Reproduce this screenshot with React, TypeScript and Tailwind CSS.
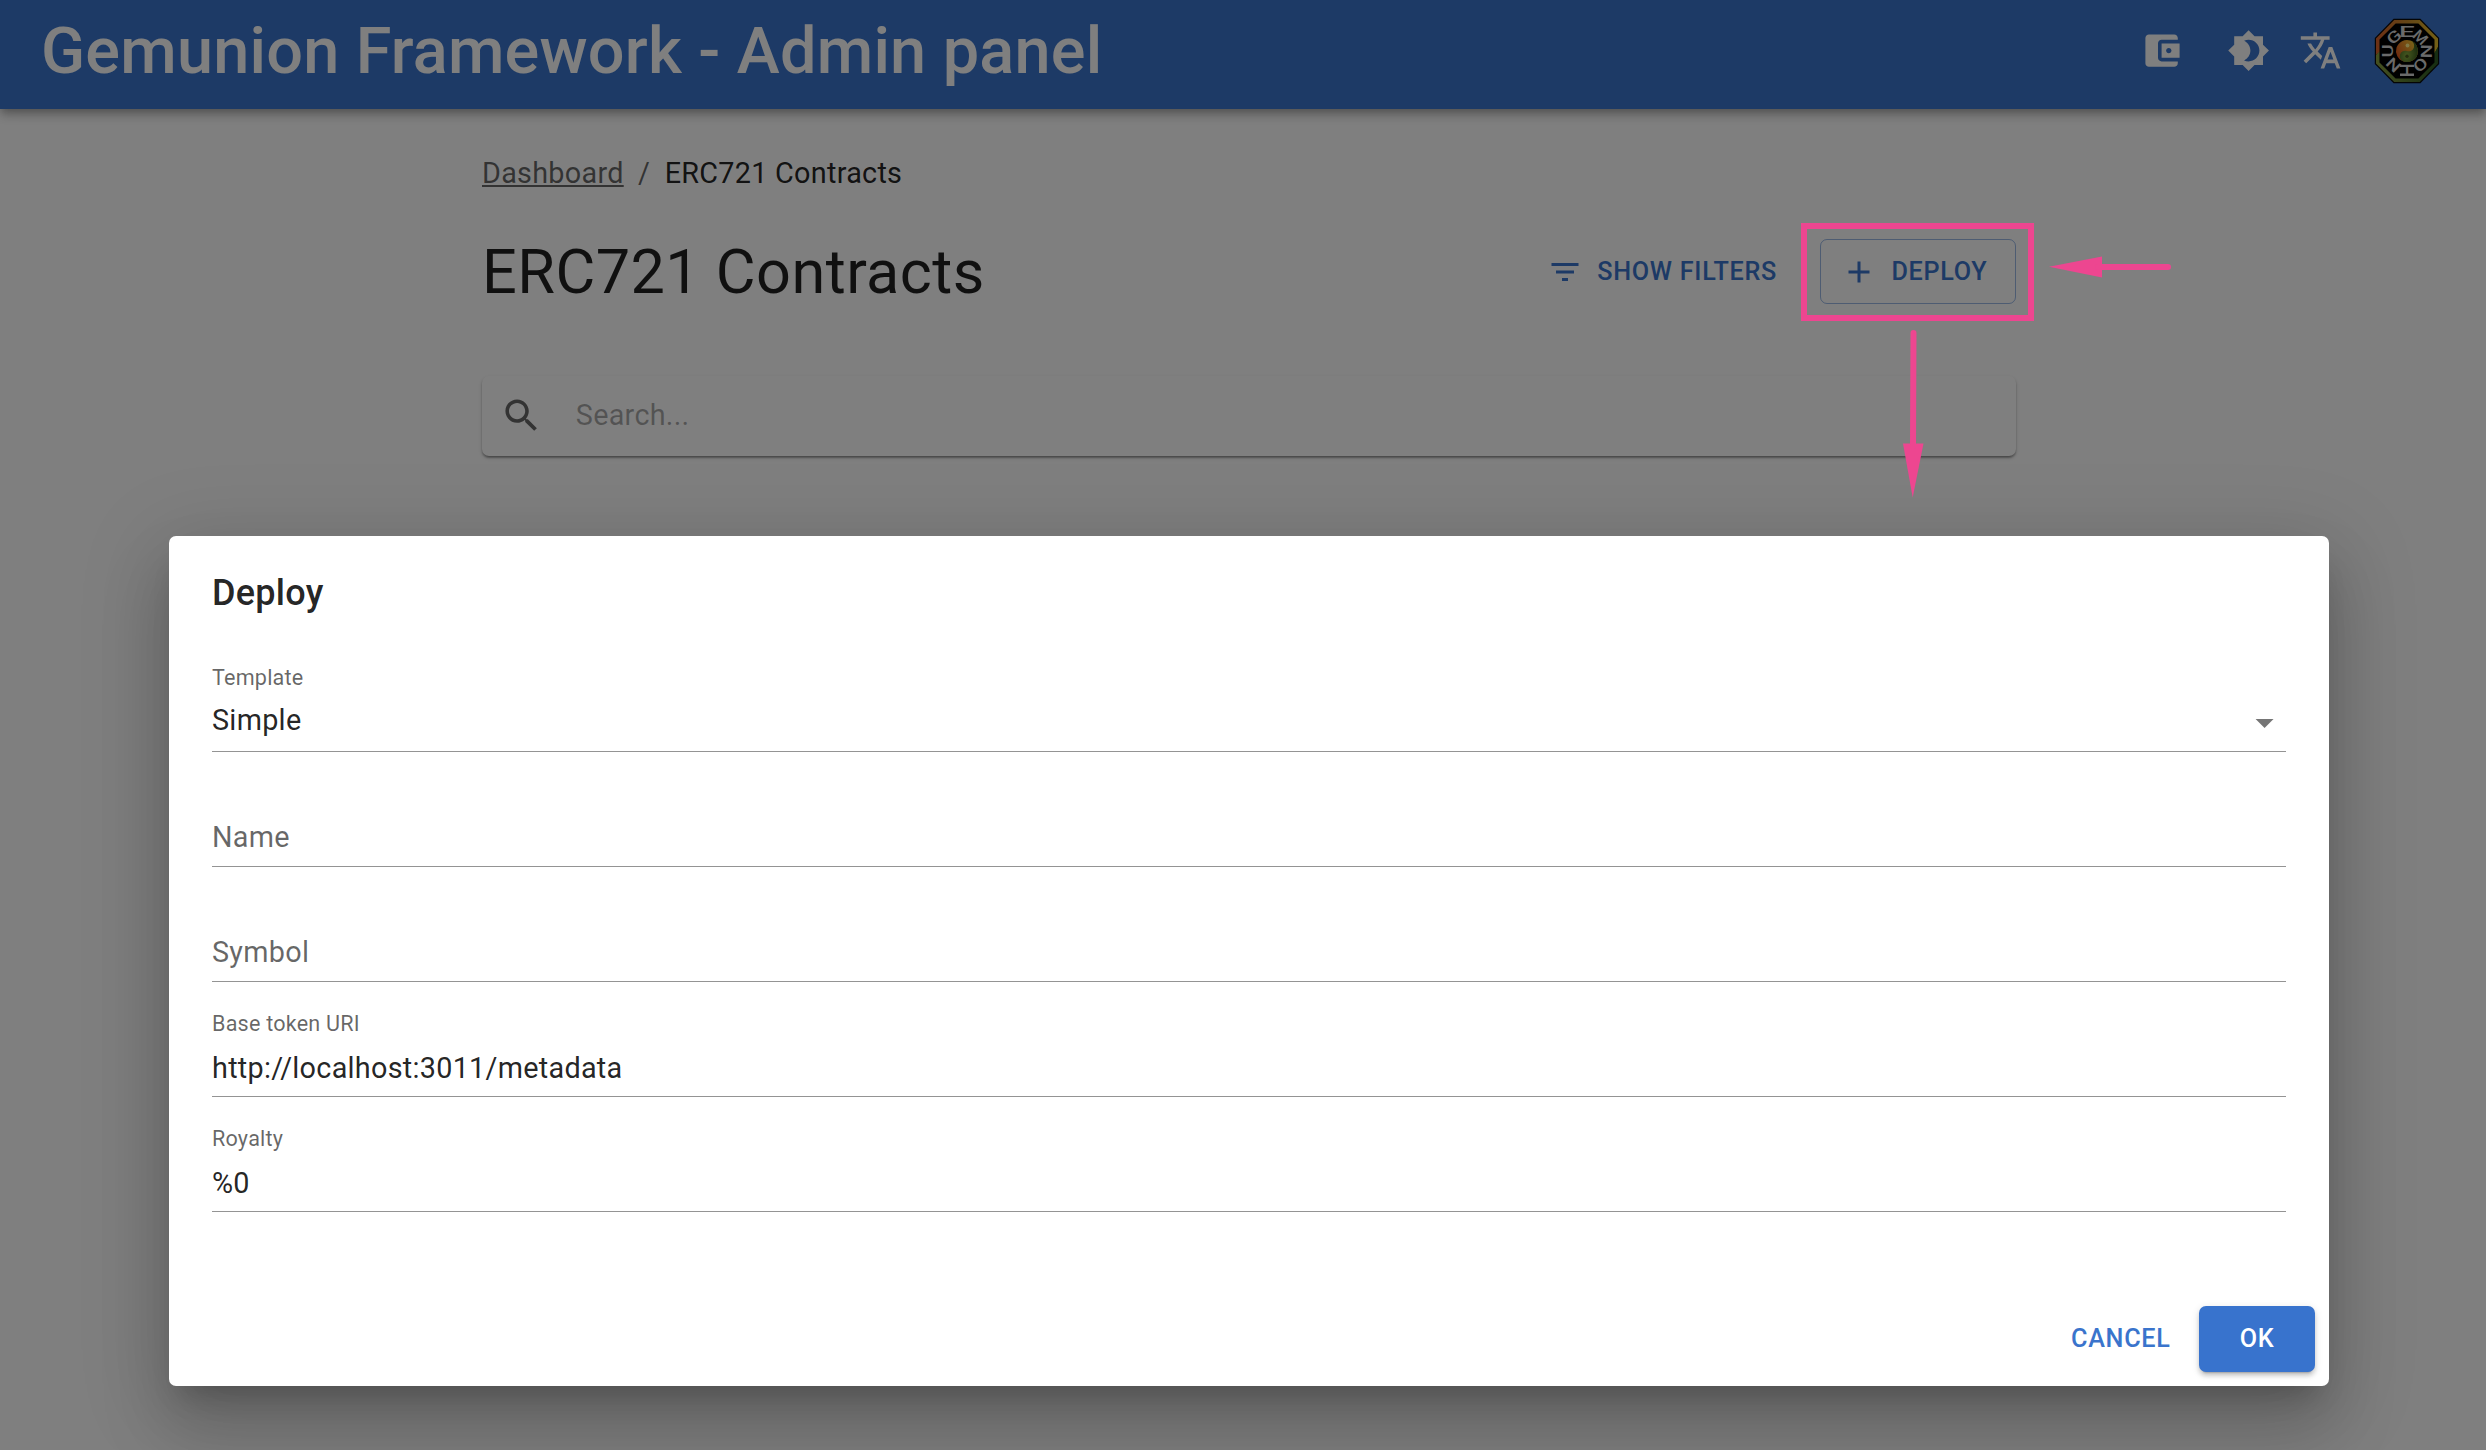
import React from "react";

function Icon({ d, className }: { d: string; className: string }) {
  return (
    <svg viewBox="0 0 24 24" fill="currentColor" className={className}>
      <path d={d} />
    </svg>
  );
}

const WALLET =
  "M21 18v1c0 1.1-.9 2-2 2H5c-1.11 0-2-.9-2-2V5c0-1.1.89-2 2-2h14c1.1 0 2 .9 2 2v1h-9c-1.11 0-2 .9-2 2v8c0 1.1.89 2 2 2h9zm-9-2h10V8H12v8zm4-2.5c-.83 0-1.5-.67-1.5-1.5s.67-1.5 1.5-1.5 1.5.67 1.5 1.5-.67 1.5-1.5 1.5z";
const BRIGHTNESS =
  "M20 8.69V4h-4.69L12 .69 8.69 4H4v4.69L.69 12 4 15.31V20h4.69L12 23.31 15.31 20H20v-4.69L23.31 12 20 8.69zM12 18c-.89 0-1.74-.2-2.5-.55C11.56 16.5 13 14.42 13 12s-1.44-4.5-3.5-5.45C10.26 6.2 11.11 6 12 6c3.31 0 6 2.69 6 6s-2.69 6-6 6z";
const TRANSLATE =
  "M12.87 15.07l-2.54-2.51.03-.03c1.74-1.94 2.98-4.17 3.71-6.53H17V4h-7V2H8v2H1v1.99h11.17C11.5 7.92 10.44 9.75 9 11.35 8.07 10.32 7.3 9.19 6.69 8h-2c.73 1.63 1.73 3.17 2.98 4.56l-5.09 5.02L4 19l5-5 3.11 3.11.76-2.04zM18.5 10h-2L12 22h2l1.12-3h4.75L21 22h2l-4.5-12zm-2.62 7l1.62-4.33L19.12 17h-3.24z";
const FILTER = "M10 18h4v-2h-4v2zM3 6v2h18V6H3zm3 7h12v-2H6v2z";
const ADD = "M19 13h-6v6h-2v-6H5v-2h6V5h2v6h6v2z";
const SEARCH =
  "M15.5 14h-.79l-.28-.27C15.41 12.59 16 11.11 16 9.5 16 5.91 13.09 3 9.5 3S3 5.91 3 9.5 5.91 16 9.5 16c1.61 0 3.09-.59 4.23-1.57l.27.28v.79l5 4.99L20.49 19l-4.99-5zm-6 0C7.01 14 5 11.99 5 9.5S7.01 5 9.5 5 14 7.01 14 9.5 11.99 14 9.5 14z";
const DROPDOWN = "M7 10l5 5 5-5z";

/* Letters around the badge, each facing outward; sx widens the glyph. */
const RING = [
  { ch: "G", at: -43, sx: 1.35 },
  { ch: "E", at: 0, sx: 1.8 },
  { ch: "M", at: 44, sx: 1.05 },
  { ch: "N", at: 91, sx: 1.3 },
  { ch: "O", at: 136, sx: 1.3 },
  { ch: "I", at: 180, sx: 1.1 },
  { ch: "N", at: 224, sx: 1.25 },
  { ch: "U", at: 270, sx: 1.3 },
];

function Avatar() {
  return (
    <svg viewBox="-36 -36 72 72" className="size-[72px]">
      <defs>
        <linearGradient id="rimTop" x1="0" x2="1" y1="0" y2="0">
          <stop offset="0" stopColor="#d8602a" />
          <stop offset="0.5" stopColor="#c88a2c" />
          <stop offset="1" stopColor="#e8c02c" />
        </linearGradient>
        <linearGradient id="rimBottom" x1="0" x2="1" y1="0" y2="0">
          <stop offset="0" stopColor="#8aa040" />
          <stop offset="1" stopColor="#2c5a24" />
        </linearGradient>
        <linearGradient id="yang" x1="0" x2="0.6" y1="0.7" y2="0">
          <stop offset="0" stopColor="#e0581c" />
          <stop offset="1" stopColor="#f0c030" />
        </linearGradient>
        <radialGradient id="yin" cx="0.4" cy="0.7" r="0.7">
          <stop offset="0" stopColor="#8cb040" />
          <stop offset="1" stopColor="#34561c" />
        </radialGradient>
      </defs>
      <path d="M-13.400-32.200H13.400L32.200-13V13L13.400 32.200H-13.400L-32.200 13V-13Z" fill="#0a0a0a" />
      <path d="M-12.800-31H12.800L31-12.600V-4L26 6V0H-26L-31 4V-12.600Z" fill="url(#rimTop)" />
      <path d="M-31 4L-26-1H26V4L31-4V12.600L12.800 31H-12.800L-31 12.600Z" fill="url(#rimBottom)" />
      <path d="M-11.400-27.500H11.400L27.500-11.400V11.400L11.400 27.500H-11.400L-27.500 11.400V-11.400Z" fill="#000" />
      {RING.map((l) => (
        <text
          key={l.at}
          textAnchor="middle"
          fontFamily="Roboto, sans-serif"
          fontWeight="500"
          fontSize="15.5"
          fill="#d4d4d4"
          transform={`rotate(${l.at}) translate(0 -19.300) scale(${l.sx} 1)`}
          y="5.500"
        >
          {l.ch}
        </text>
      ))}
      <path d="M-7 14.900H7M-7 23.700H7" stroke="#d4d4d4" strokeWidth="2.400" />
      <g transform="rotate(18)">
        <circle r="11" fill="url(#yang)" />
        <path d="M0-11A11 11 0 0 1 0 11A5.500 5.500 0 0 1 0 0A5.500 5.500 0 0 0 0-11Z" fill="url(#yin)" />
      </g>
      <circle cx="0.500" cy="-5.500" r="1.900" fill="#fff08c" />
      <circle cx="0" cy="5.300" r="1.700" fill="#4c5a1c" />
    </svg>
  );
}

function Header() {
  return (
    <header className="flex h-[109px] items-start bg-[#3a74cc] pt-[13px] pr-[43px] pl-[41px] text-white shadow-[0_4px_7px_-2px_rgba(0,0,0,0.2),0_7px_9px_0_rgba(0,0,0,0.14),0_2px_18px_0_rgba(0,0,0,0.12)]">
      <h1 className="flex-1 text-[64.8px] leading-[76px] font-medium tracking-[0.0033em]">
        Gemunion Framework - Admin panel
      </h1>
      <div className="mt-[2px] flex h-[72px] items-center">
        <Icon d={WALLET} className="mr-[43px] size-[43.2px]" />
        <Icon d={BRIGHTNESS} className="mr-[29px] size-[43.2px]" />
        <Icon d={TRANSLATE} className="mr-[29px] size-[43.2px]" />
        <Avatar />
      </div>
    </header>
  );
}

function Page() {
  return (
    <main className="ml-[482px] flex w-[1534px] flex-col pt-[43px]">
      <nav className="flex h-[43px] items-center gap-[14.4px] text-[28.8px] tracking-[0.00938em] text-black/60">
        <a className="underline decoration-[2px] underline-offset-[2px]">Dashboard</a>
        <span>/</span>
        <span className="text-black/87">ERC721 Contracts</span>
      </nav>
      <div className="mt-[38px] flex h-[77px] items-center">
        <h2 className="flex-1 text-[61.2px] leading-[76px] tracking-[0.00735em] text-black/87">
          ERC721 Contracts
        </h2>
        <div className="flex items-center text-[25.2px] leading-[44px] font-medium tracking-[0.02857em] text-[#3a74cc]">
          <button className="mr-[29px] flex items-center gap-[14.4px] pr-[14px]">
            <Icon d={FILTER} className="size-[36px]" />
            SHOW FILTERS
          </button>
          <button className="flex h-[65px] w-[196px] items-center gap-[14.4px] rounded-[7px] border border-[#3a74cc]/50 pl-[20px]">
            <Icon d={ADD} className="size-[36px]" />
            DEPLOY
          </button>
        </div>
      </div>
      <div className="mt-[66px] flex h-[80px] items-center rounded-[7px] bg-white pl-[17.6px] text-[28.8px] tracking-[0.00938em] shadow-[0_4px_2px_-4px_rgba(0,0,0,0.4),0_2px_2px_0_rgba(0,0,0,0.28),0_2px_5px_0_rgba(0,0,0,0.12)]">
        <Icon d={SEARCH} className="mr-[33px] size-[43.2px] text-black/60" />
        <span className="text-black/35">Search...</span>
      </div>
    </main>
  );
}

function Field({ label, value, select }: { label: string; value?: string; select?: boolean }) {
  if (!value) {
    return (
      <div className="h-[115px] border-b border-black/42 pt-[64px] text-[28.8px] leading-[43px] tracking-[0.00938em] text-black/60">
        {label}
      </div>
    );
  }
  return (
    <div className={`flex h-[115px] flex-col border-b border-black/42 ${select ? "pt-[28px]" : "pt-[29px]"}`}>
      <label className="text-[21.6px] leading-[26px] tracking-[0.00938em] text-black/60">{label}</label>
      <div
        className={`flex justify-between text-[28.8px] leading-[43px] tracking-[0.00938em] text-black/87 ${select ? "mt-[8px]" : "mt-[10px]"}`}
      >
        {value}
        {select && <Icon d={DROPDOWN} className="mt-[2px] size-[43.2px] text-black/54" />}
      </div>
    </div>
  );
}

function Dialog() {
  return (
    <section className="flex h-[850px] w-[2160px] flex-col rounded-[7px] bg-white shadow-[0_20px_27px_-13px_rgba(0,0,0,0.2),0_43px_68px_5px_rgba(0,0,0,0.14),0_16px_83px_14px_rgba(0,0,0,0.12)]">
      <h3 className="px-[43px] pt-[28px] text-[36px] leading-[58px] font-medium tracking-[0.0075em] text-black/87">
        Deploy
      </h3>
      <div className="mt-[15px] flex-1 px-[43px]">
        <Field label="Template" value="Simple" select />
        <Field label="Name" />
        <Field label="Symbol" />
        <Field label="Base token URI" value="http://localhost:3011/metadata" />
        <Field label="Royalty" value="%0" />
      </div>
      <footer className="flex items-center justify-end gap-[14px] p-[14px] text-[25.2px] leading-[44px] font-medium tracking-[0.02857em]">
        <button className="h-[66px] px-[14.4px] text-[#3a74cc]">CANCEL</button>
        <button className="h-[66px] w-[116px] rounded-[7px] bg-[#3873cd] text-white shadow-[0_5px_2px_-4px_rgba(0,0,0,0.2),0_4px_4px_0_rgba(0,0,0,0.14),0_2px_9px_0_rgba(0,0,0,0.12)]">
          OK
        </button>
      </footer>
    </section>
  );
}

function Annotations() {
  return (
    <>
      <div className="absolute top-[223px] left-[1801px] h-[98px] w-[233px] border-[6px] border-[#ed4690]" />
      <svg viewBox="0 0 124 24" className="absolute top-[255px] left-[2048px] h-[24px] w-[124px]" fill="#ed4690">
        <path d="M1 11.700L54 1.500V22.500Z" />
        <path d="M50 12L120 12" stroke="#ed4690" strokeWidth="6" strokeLinecap="round" />
      </svg>
      <svg viewBox="0 0 24 170" className="absolute top-[328px] left-[1901px] h-[170px] w-[24px]" fill="#ed4690">
        <path d="M2 115.500H22.500L11.700 169.500Z" />
        <path d="M12.500 5L12 118" stroke="#ed4690" strokeWidth="6" strokeLinecap="round" />
      </svg>
    </>
  );
}

export default function App() {
  return (
    <div className="relative h-[1450px] w-[2486px] overflow-hidden bg-white font-['Roboto',sans-serif]">
      <Header />
      <Page />
      <div className="absolute inset-0 flex items-end justify-center bg-black/50 pb-[64px] pl-[12px]">
        <Dialog />
      </div>
      <Annotations />
    </div>
  );
}
